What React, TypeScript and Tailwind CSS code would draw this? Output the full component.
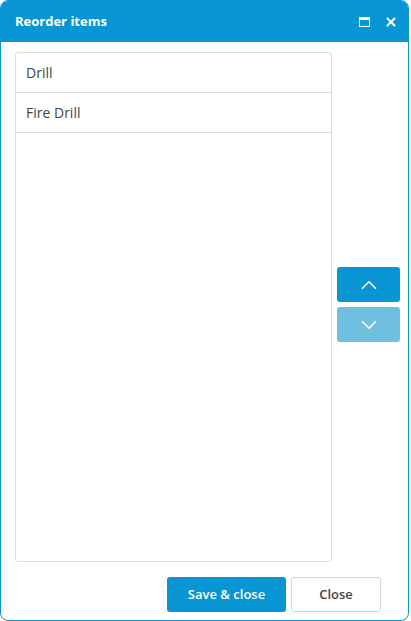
import { ChevronDown, ChevronUp, X } from "lucide-react";

const items = ["Drill", "Fire Drill"];

export default function App() {
  return (
    <div className="h-[621px] w-[411px] bg-white pr-[2px] font-['Open_Sans',sans-serif]">
      <div className="flex h-full flex-col overflow-hidden rounded-[8px] border border-[#0795d3] bg-white">
        {/* Header */}
        <div className="flex h-[41px] shrink-0 items-center justify-between bg-[#0795d3] pl-[14px] pr-[10px] text-white">
          <span className="pt-[1px] text-[13px] font-bold">Reorder items</span>
          <div className="flex items-center gap-[14px]">
            <div className="h-[10px] w-[11px] border border-t-[3px] border-white" />
            <X className="h-[14px] w-[14px]" strokeWidth={3.5} />
          </div>
        </div>

        {/* Body */}
        <div className="flex flex-1 gap-[5px] pl-[14px] pr-[8px] pt-[10px]">
          <div className="flex h-[510px] w-[317px] flex-col rounded-[3px] border border-[#dcdcdc]">
            {items.map((item) => (
              <div
                key={item}
                className="flex h-[40px] items-center border-b border-[#dcdcdc] pl-[10px] text-[14px] text-[#444]"
              >
                {item}
              </div>
            ))}
          </div>
          <div className="flex flex-1 flex-col gap-[5px] pt-[215px]">
            <button className="flex h-[35px] w-[63px] items-center justify-center rounded-[3px] bg-[#0795d3] text-white">
              <ChevronUp className="h-[26px] w-[26px]" strokeWidth={1.6} />
            </button>
            <button className="flex h-[35px] w-[63px] items-center justify-center rounded-[3px] bg-[#6fbfe0] text-white">
              <ChevronDown className="h-[26px] w-[26px]" strokeWidth={1.6} />
            </button>
          </div>
        </div>

        {/* Footer */}
        <div className="flex justify-end gap-[5px] pb-[8px] pr-[27px] pt-[14px]">
          <button className="h-[35px] w-[119px] rounded-[3px] bg-[#0795d3] text-[13px] font-semibold text-white">
            Save &amp; close
          </button>
          <button className="h-[35px] w-[90px] rounded-[3px] border border-[#d6d6d6] bg-white text-[13px] font-semibold text-[#444]">
            Close
          </button>
        </div>
      </div>
    </div>
  );
}
